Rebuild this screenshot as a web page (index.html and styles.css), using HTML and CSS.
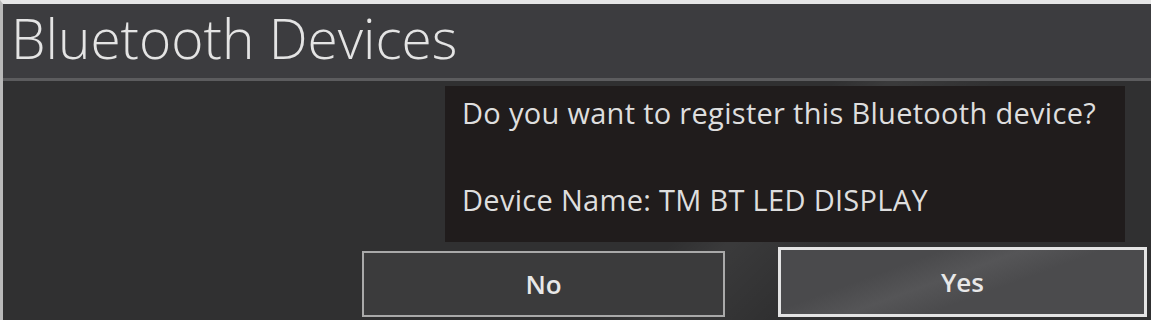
FILE: index.html
```html
<!DOCTYPE html>
<html>
<head>
<meta charset="utf-8">
<link rel="stylesheet" href="styles.css">
</head>
<body>
<div class="screen">
  <header class="header">
    <h1 class="title">Bluetooth Devices</h1>
  </header>
  <div class="sep"></div>
  <main class="content">
    <section class="panel">
      <p class="question">Do you want to register this Bluetooth device?</p>
      <p class="device">Device Name: TM BT LED DISPLAY</p>
    </section>
    <div class="buttons">
      <button class="btn btn-no">No</button>
      <button class="btn btn-yes">Yes</button>
    </div>
  </main>
</div>
</body>
</html>
```
FILE: styles.css
```css
* { box-sizing: border-box; }
html, body { margin: 0; padding: 0; }
body {
  width: 1151px;
  height: 320px;
  overflow: hidden;
  background: #2f2f30;
  font-family: "Open Sans", "Liberation Sans", sans-serif;
}
.screen {
  width: 1151px;
  height: 320px;
  border-top: 4px solid #e6e6e6;
  border-left: 3px solid #b9b9b9;
  display: flex;
  flex-direction: column;
  background:
    linear-gradient(135deg, rgba(0,0,0,0) 62%, rgba(255,255,255,0.05) 66%, rgba(0,0,0,0) 74%),
    #303031;
}
.header {
  height: 74px;
  background: #3c3c3f;
  display: flex;
  align-items: flex-start;
  padding-left: 8px;
  padding-top: 1px;
}
.title {
  margin: 0;
  font-weight: 300;
  font-size: 55px;
  color: #e4e4e4;
  letter-spacing: 0;
  line-height: 66px;
}
.sep {
  height: 3px;
  background: #5c5c5e;
}
.content {
  flex: 1;
  display: flex;
  flex-direction: column;
}
.panel {
  margin-left: 442px;
  margin-top: 5px;
  width: 680px;
  height: 156px;
  background: #201c1c;
  padding: 8px 0 0 17px;
  color: #dedede;
}
.question {
  margin: 0;
  font-size: 29px;
  letter-spacing: 0.3px;
  line-height: 38px;
}
.device {
  margin: 49px 0 0;
  font-size: 29px;
  letter-spacing: 0.3px;
  line-height: 38px;
}
.buttons {
  display: flex;
  align-items: flex-end;
  gap: 53px;
  margin-left: 359px;
  margin-top: 5px;
}
.btn {
  font-family: "Open Sans", "Liberation Sans", sans-serif;
  color: #e8e8e8;
  font-size: 26px;
  font-weight: 600;
  display: flex;
  align-items: center;
  justify-content: center;
  padding: 0;
}
.btn-no {
  width: 363px;
  height: 66px;
  border: 2px solid #a9a9a9;
  background: #3b3b3c;
}
.btn-yes {
  width: 369px;
  height: 70px;
  border: 3px solid #e4e4e4;
  background: linear-gradient(160deg, #4a4a4c 30%, #555557 45%, #4b4b4d 60%);
}
```
